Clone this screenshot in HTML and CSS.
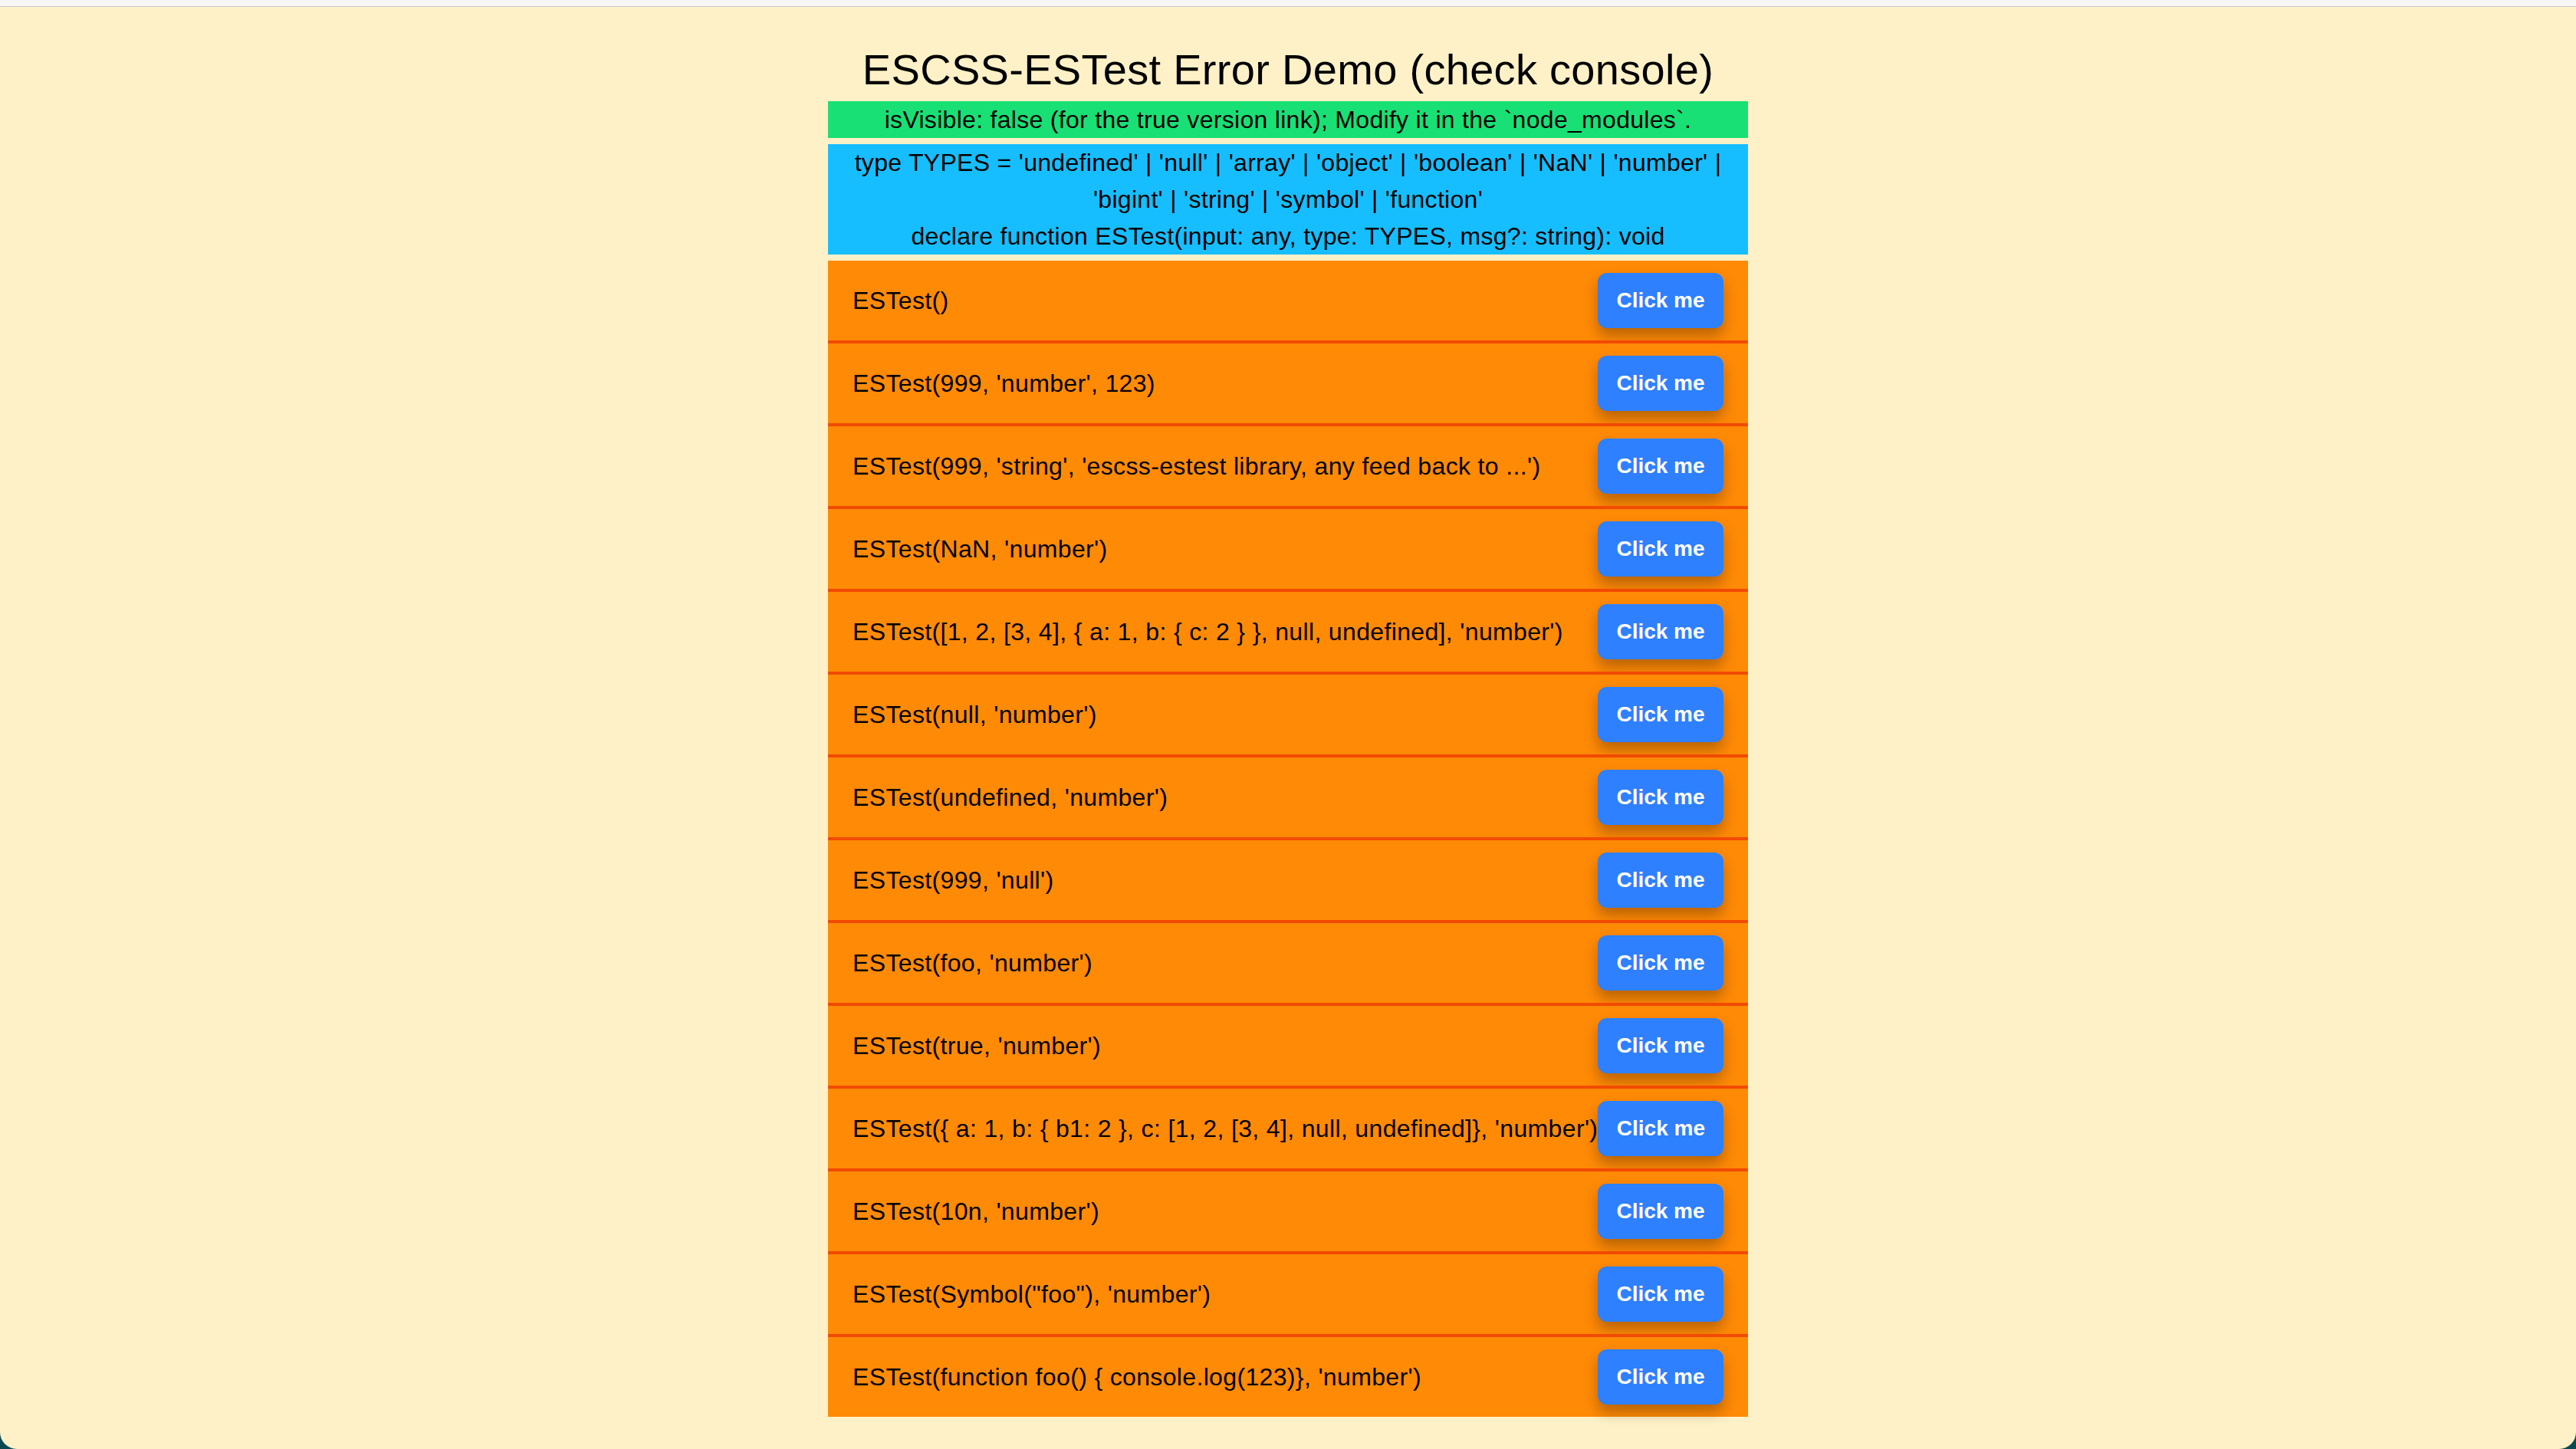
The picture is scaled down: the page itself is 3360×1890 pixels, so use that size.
FILE: index.html
```html
<!DOCTYPE html>
<html lang="en">
<head>
<meta charset="utf-8">
<title>ESCSS-ESTest Error Demo</title>
<link rel="stylesheet" href="styles.css">
</head>
<body>
<div class="window">
  <div class="topbar"></div>
  <main class="content">
    <h1 class="title">ESCSS-ESTest Error Demo (check console)</h1>
    <section class="panel">
      <div class="notice notice-green">isVisible: false (for the true version link); Modify it in the `node_modules`.</div>
      <div class="notice notice-blue">type TYPES = 'undefined' | 'null' | 'array' | 'object' | 'boolean' | 'NaN' | 'number' |<br>'bigint' | 'string' | 'symbol' | 'function'<br>declare function ESTest(input: any, type: TYPES, msg?: string): void</div>
      <div class="list">
        <div class="row"><span class="code">ESTest()</span><button class="btn">Click me</button></div>
        <div class="row"><span class="code">ESTest(999, 'number', 123)</span><button class="btn">Click me</button></div>
        <div class="row"><span class="code">ESTest(999, 'string', 'escss-estest library, any feed back to ...')</span><button class="btn">Click me</button></div>
        <div class="row"><span class="code">ESTest(NaN, 'number')</span><button class="btn">Click me</button></div>
        <div class="row"><span class="code">ESTest([1, 2, [3, 4], { a: 1, b: { c: 2 } }, null, undefined], 'number')</span><button class="btn">Click me</button></div>
        <div class="row"><span class="code">ESTest(null, 'number')</span><button class="btn">Click me</button></div>
        <div class="row"><span class="code">ESTest(undefined, 'number')</span><button class="btn">Click me</button></div>
        <div class="row"><span class="code">ESTest(999, 'null')</span><button class="btn">Click me</button></div>
        <div class="row"><span class="code">ESTest(foo, 'number')</span><button class="btn">Click me</button></div>
        <div class="row"><span class="code">ESTest(true, 'number')</span><button class="btn">Click me</button></div>
        <div class="row"><span class="code">ESTest({ a: 1, b: { b1: 2 }, c: [1, 2, [3, 4], null, undefined]}, 'number')</span><button class="btn">Click me</button></div>
        <div class="row"><span class="code">ESTest(10n, 'number')</span><button class="btn">Click me</button></div>
        <div class="row"><span class="code">ESTest(Symbol("foo"), 'number')</span><button class="btn">Click me</button></div>
        <div class="row"><span class="code">ESTest(function foo() { console.log(123)}, 'number')</span><button class="btn">Click me</button></div>
      </div>
    </section>
  </main>
</div>
</body>
</html>
```
FILE: styles.css
```css
html, body {
  margin: 0;
  padding: 0;
}

body {
  background: #0c4850;
  font-family: "Liberation Sans", Arial, sans-serif;
  color: #000;
}

.window {
  height: 1890px;
  background: #fef1c7;
  border-radius: 0 0 22px 22px;
  overflow: hidden;
  display: flex;
  flex-direction: column;
}

.topbar {
  height: 8px;
  flex-shrink: 0;
  background: #f7f7fa;
  border-bottom: 1px solid #c9c9cc;
}

.content {
  padding-top: 50px;
  display: flex;
  flex-direction: column;
  align-items: center;
}

.title {
  margin: 0 0 9px;
  font-size: 56px;
  line-height: 64px;
  font-weight: 400;
  letter-spacing: 0.3px;
  text-align: center;
}

.panel {
  width: 1200px;
  display: flex;
  flex-direction: column;
  gap: 8px;
}

.notice {
  font-size: 32px;
  line-height: 48px;
  letter-spacing: 0.3px;
  text-align: center;
  padding: 0 8px;
}

.notice-green {
  background: #19e074;
}

.notice-blue {
  background: #17beff;
}

.list {
  display: flex;
  flex-direction: column;
  background: #ff8a06;
}

.row {
  height: 104px;
  padding: 0 32px;
  display: flex;
  align-items: center;
  justify-content: space-between;
  background: #ff8a06;
}

.row + .row {
  border-top: 4px solid #f24a00;
}

.code {
  font-size: 32px;
  line-height: 48px;
  letter-spacing: 0.35px;
  white-space: nowrap;
}

.btn {
  flex-shrink: 0;
  width: 164px;
  height: 72px;
  border: none;
  border-radius: 12px;
  background: #2e80ff;
  color: #fff;
  font-family: "Liberation Sans", Arial, sans-serif;
  font-size: 28px;
  font-weight: 700;
  box-shadow: 0 10px 18px rgba(0, 0, 0, 0.28);
  cursor: pointer;
}
```
